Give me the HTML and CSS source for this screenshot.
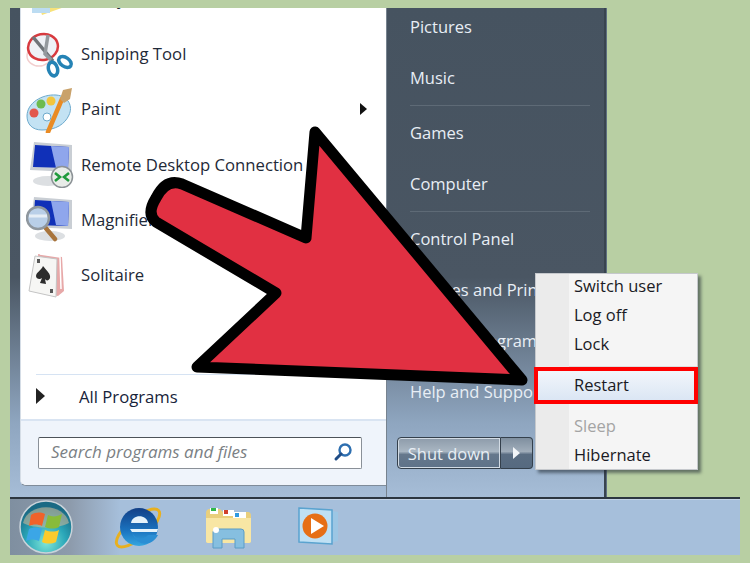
FILE: index.html
```html
<!DOCTYPE html>
<html lang="en">
  <head>
    <meta charset="UTF-8" />
    <title>Restart from the Start menu</title>
    <link rel="stylesheet" href="styles.css">
  </head>
  <body>
    <div class="desktop">
      <div class="startmenu">
        <div class="left">
          <ul class="programs">
            <li class="program">
              <svg class="icon" viewBox="0 0 48 48"><path d="M10 20 L36 12 L44 30 L16 40 Z" fill="#f7e27a"/><path d="M6 22 L24 20 L24 38 L6 38 Z" fill="#bcdcf2"/></svg>
              <span>Sticky Notes</span>
            </li>
            <li class="program">
              <svg class="icon" viewBox="0 0 48 48">
                <ellipse cx="13" cy="26" rx="12" ry="10" fill="none" stroke="#f2cfcf" stroke-width="1.5"/>
                <ellipse cx="17" cy="17" rx="15" ry="13" fill="#eef1f6" stroke="#d83a3f" stroke-width="2.5" transform="rotate(-12 17 17)"/>
                <path d="M7 7 L27 31" stroke="#6f7479" stroke-width="3.5"/>
                <path d="M22 5 L19 24 L25 30" fill="none" stroke="#94999e" stroke-width="3.5"/>
                <ellipse cx="27" cy="39" rx="4.5" ry="7" fill="#fff" stroke="#2583b5" stroke-width="3.5" transform="rotate(-15 27 39)"/>
                <ellipse cx="39" cy="32" rx="7" ry="4.5" fill="#fff" stroke="#2583b5" stroke-width="3.5" transform="rotate(35 39 32)"/>
              </svg>
              <span>Snipping Tool</span>
            </li>
            <li class="program">
              <svg class="icon" viewBox="0 0 48 48">
                <path d="M1 31 C1 18 16 9 30 10 C43 11 47 22 43 30 C39 39 30 45 16 45 C6 45 1 39 1 31 Z" fill="#c3e2f3" stroke="#6ca9cc"/>
                <circle cx="8" cy="28" r="4.5" fill="#e2574c"/>
                <circle cx="15" cy="19" r="4.5" fill="#6dbb4f"/>
                <circle cx="25" cy="16" r="4.5" fill="#f3c53d"/>
                <circle cx="21" cy="32" r="4" fill="#fff" stroke="#6ca9cc"/>
                <path d="M22 47 L36 14" stroke="#e98b24" stroke-width="4.5" stroke-linecap="round"/>
                <path d="M34 14 L37 5 L46 3 L44 14 L38 18 Z" fill="#c9a26b"/>
              </svg>
              <span>Paint</span>
              <i class="caret"></i>
            </li>
            <li class="program">
              <svg class="icon" viewBox="0 0 48 48">
                <ellipse cx="22" cy="41" rx="15" ry="5" fill="#dcdfe2"/>
                <path d="M8 2 L46 5 L46 32 L4 30 Z" fill="#c9ced4"/>
                <path d="M9 5 L43 7 L42 28 L7 27 Z" fill="#1030b8"/>
                <path d="M25 6 L43 7 L42 28 L30 28 Z" fill="#8fa6ec"/>
                <circle cx="36" cy="37" r="10.5" fill="#e8ece8" stroke="#8c9296" stroke-width="1.5"/>
                <path d="M29 33 L34 37 L29 41 M43 33 L38 37 L43 41" fill="none" stroke="#1f9a3c" stroke-width="2.6"/>
              </svg>
              <span>Remote Desktop Connection</span>
            </li>
            <li class="program">
              <svg class="icon" viewBox="0 0 48 48">
                <ellipse cx="24" cy="41" rx="15" ry="5" fill="#dcdfe2"/>
                <path d="M8 2 L46 5 L46 34 L4 32 Z" fill="#c9ced4"/>
                <path d="M9 5 L43 7 L42 31 L7 30 Z" fill="#1030b8"/>
                <path d="M25 6 L43 7 L42 31 L30 30 Z" fill="#8fa6ec"/>
                <path d="M18 31 L29 44" stroke="#a8743c" stroke-width="4.5" stroke-linecap="round"/>
                <circle cx="12" cy="23" r="11" fill="#b9cfe8" stroke="#8f979e" stroke-width="2.5"/>
                <path d="M3 21 H21" stroke="#e6eef6" stroke-width="3"/>
              </svg>
              <span>Magnifier</span>
            </li>
            <li class="program">
              <svg class="icon" viewBox="0 0 48 48">
                <path d="M12 3 L36 6 L38 40 L32 45 L14 42 Z" fill="#e7a8a8"/>
                <path d="M14 3 L34 6 L35 38" fill="none" stroke="#fff" stroke-width="1.5"/>
                <path d="M9 5 L31 8 L30 46 L3 40 Z" fill="#f6f6f4" stroke="#c4c4c4"/>
                <path d="M17 15 C21 20 25 23 24 27 C23 30 20 30 19 28 L20 33 L14 32 L16 27 C14 29 10 28 10 25 C10 21 15 20 17 15 Z" fill="#2c2c2c"/>
                <path d="M11 8 h3 v4 h-3 Z M24 38 h3 v4 h-3 Z" fill="#555"/>
              </svg>
              <span>Solitaire</span>
            </li>
          </ul>
          <div class="allprograms">
            <i class="caret big"></i>
            <span>All Programs</span>
          </div>
          <div class="searcharea">
            <div class="searchbox">
              <span>Search programs and files</span>
              <svg class="lens" viewBox="0 0 20 20"><circle cx="12" cy="8" r="5.5" fill="#fff" stroke="#2e6fb0" stroke-width="2.4"/><path d="M8 12 L3 17" stroke="#1f4c86" stroke-width="3" stroke-linecap="round"/></svg>
            </div>
          </div>
        </div>
        <div class="right">
          <ul class="places">
            <li>Pictures</li>
            <li>Music</li>
            <li class="sep"></li>
            <li>Games</li>
            <li>Computer</li>
            <li class="sep"></li>
            <li>Control Panel</li>
            <li>Devices and Printers</li>
            <li>Default Programs</li>
            <li>Help and Support</li>
          </ul>
          <div class="shutdown">
            <div class="sd-main">Shut down</div>
            <div class="sd-arrow"><i></i></div>
          </div>
        </div>
      </div>

      <div class="taskbar">
        <div class="orb-wrap">
          <svg class="orb" viewBox="0 0 56 56">
            <defs>
              <radialGradient id="orbfill" cx="50%" cy="80%" r="70%">
                <stop offset="0" stop-color="#7fe6d8"/>
                <stop offset="0.55" stop-color="#2aa6b8"/>
                <stop offset="1" stop-color="#1a6a84"/>
              </radialGradient>
            </defs>
            <circle cx="28" cy="28" r="26" fill="url(#orbfill)" stroke="#c9d3da" stroke-width="1.5"/>
            <path d="M5 24 C10 3 46 3 51 24 C40 30 16 30 5 24 Z" fill="#c8b89a" opacity="0.6"/>
            <path d="M13 16 C18 13 22 13 27 15 L24 27 C20 25 15 25 11 27 Z" fill="#f0622a"/>
            <path d="M30 16 C34 18 39 18 44 15 L41 28 C37 30 32 30 27 28 Z" fill="#88bb3a"/>
            <path d="M11 30 C15 28 20 28 24 30 L21 42 C17 40 13 40 8 42 Z" fill="#3ba6e6"/>
            <path d="M27 31 C32 33 37 33 41 31 L38 43 C34 45 28 45 24 43 Z" fill="#fbcb2c"/>
          </svg>
        </div>
        <svg class="app app-ie" viewBox="0 0 56 56">
          <defs>
            <linearGradient id="iefill" x1="0" y1="0" x2="0" y2="1">
              <stop offset="0" stop-color="#123f86"/>
              <stop offset="0.6" stop-color="#1b74c0"/>
              <stop offset="1" stop-color="#35a6e0"/>
            </linearGradient>
          </defs>
          <ellipse cx="28" cy="29" rx="27" ry="10" transform="rotate(-40 28 29)" fill="none" stroke="#e8b020" stroke-width="3"/>
          <circle cx="29" cy="28" r="19" fill="url(#iefill)"/>
          <path d="M21 24 C22 15 37 15 38 24 Z" fill="#e4f2fb"/>
          <path d="M20 30 L48 30 L47 33 L22 33 Z" fill="#e4f2fb"/>
          <path d="M22 33 C25 41 34 41 38 36 L48 36 C42 48 26 48 22 33 Z" fill="#2a8ed4"/>
        </svg>
        <svg class="app app-folder" viewBox="0 0 48 44">
          <path d="M2 8 Q2 4 6 4 H16 L19 7 H44 Q47 7 47 11 V36 Q47 38 44 38 H5 Q2 38 2 36 Z" fill="#e9cf7c"/>
          <path d="M6 3 H14 V9 H6 Z" fill="#fff"/><path d="M7 3 H12 V6 H7 Z" fill="#2fb84a"/>
          <path d="M19 5 H30 V11 H19 Z" fill="#fff"/><path d="M20 5 H24 V9 H20 Z" fill="#d0402c"/>
          <path d="M29 7 H42 V13 H29 Z" fill="#fff"/><path d="M31 8 H35 V12 H31 Z" fill="#2f9ae0"/>
          <path d="M2 13 H47 V36 Q47 38 44 38 H5 Q2 38 2 36 Z" fill="#f8e6a4"/>
          <path d="M9 43 V27 Q9 24 12 24 H37 Q40 24 40 27 V43 H31 V34 H18 V43 Z" fill="#86bfe0" stroke="#5a9cc6"/>
          <circle cx="12" cy="25" r="3" fill="#fff"/>
        </svg>
        <svg class="app app-wmp" viewBox="0 0 44 40">
          <path d="M30 3 L41 5 V34 L30 37 Z" fill="#9cc6e4"/>
          <path d="M2 1 L35 3 V37 L2 35 Z" fill="#bfe0f4" stroke="#5aa3cf" stroke-width="1.5"/>
          <circle cx="18" cy="19" r="12.5" fill="#e66f16"/>
          <path d="M14 11 L27 19 L14 27 Z" fill="#fff"/>
        </svg>
      </div>

      <svg class="arrow" viewBox="0 0 730 547">
        <path d="M305 124 L512 372 L187 359 L266 285 L146 214 Q136 206 146 190 Q156 170 172 176 L296 230 Z" fill="#e13042" stroke="#000" stroke-width="11" stroke-linejoin="round"/>
      </svg>

      <ul class="powermenu">
        <li>Switch user</li>
        <li>Log off</li>
        <li>Lock</li>
        <li class="menusep"></li>
        <li class="active">Restart</li>
        <li class="menusep low"></li>
        <li class="disabled">Sleep</li>
        <li class="last">Hibernate</li>
      </ul>
    </div>
  </body>
</html>
```

FILE: styles.css
```css
* {
  box-sizing: border-box;
}
body {
  margin: 0;
  padding: 8px 10px;
  height: 563px;
  overflow: hidden;
  background: #b8cfa3;
  font-family: "Open Sans", "Noto Sans", sans-serif;
}
ul {
  list-style: none;
  margin: 0;
  padding: 0;
}
.desktop {
  position: relative;
  width: 730px;
  height: 547px;
  overflow: hidden;
}

/* Start menu */
.startmenu {
  display: flex;
  width: 597px;
  height: 489px;
  background: linear-gradient(#465360 0%, #4a5663 55%, #8fa6c0 85%, #a6bdd7 100%);
  border-right: 1px solid #5e6f80;
}
.left {
  width: 366px;
  height: 478px;
  margin-left: 10px;
  display: flex;
  flex-direction: column;
  background: #fff;
  border-bottom-left-radius: 6px;
  border-bottom: 1px solid #7f8c9a;
  border-left: 1px solid #d5dde6;
  overflow: hidden;
}
.programs {
  margin-top: -37px;
  height: 403px;
}
.program {
  display: flex;
  align-items: center;
  height: 55.2px;
  padding-left: 5px;
  font-size: 16.7px;
  color: #1f2a38;
}
.icon {
  width: 48px;
  height: 48px;
  margin-right: 7px;
  flex: none;
  filter: blur(0.3px);
}
.caret {
  width: 0;
  height: 0;
  margin-left: auto;
  margin-right: 19px;
  border-left: 7px solid #111;
  border-top: 6px solid transparent;
  border-bottom: 6px solid transparent;
}
.allprograms {
  display: flex;
  align-items: center;
  height: 45px;
  margin: 0 10px 0 15px;
  padding-bottom: 2px;
  border-top: 1px solid #d6e3f3;
  font-size: 16.7px;
  color: #17233a;
}
.caret.big {
  margin: 0 34px 0 0;
  border-left-width: 9px;
  border-top-width: 8px;
  border-bottom-width: 8px;
  border-left-color: #222;
}
.searcharea {
  flex: 1;
  padding: 16px 24px 0 17px;
  background: #eff4fb;
  border-top: 2px solid #d9e4f2;
}
.searchbox {
  display: flex;
  align-items: center;
  justify-content: space-between;
  height: 32px;
  padding: 0 8px 3px 12px;
  background: #fff;
  border: 1px solid #8a9098;
  border-top-color: #4c5258;
  border-radius: 2px;
  font-size: 17px;
  font-style: italic;
  color: #7b7f84;
}
.lens {
  width: 20px;
  height: 20px;
}

/* Right column */
.right {
  flex: 1;
  padding-left: 23px;
  border-left: 1px solid #77838f;
  border-right: 2px solid #39444f;
}
.places {
  margin-top: -7px;
  color: #e8eef5;
  font-size: 16.5px;
}
.places li {
  display: flex;
  align-items: center;
  height: 51px;
}
.places .sep {
  height: 1px;
  width: 180px;
  margin: 1.5px 0;
  background: #5e6a76;
}
.shutdown {
  display: flex;
  width: 136px;
  height: 32px;
  margin: 20px 0 0 -13px;
}
.sd-main {
  display: flex;
  align-items: center;
  justify-content: center;
  width: 104px;
  background: linear-gradient(#8d9baa 0%, #a9b6c2 45%, #66788c 55%, #5e7288 100%);
  border: 1px solid #34404c;
  border-radius: 4px 0 0 4px;
  box-shadow: inset 0 0 0 1px #d2dbe4;
  color: #e8eef4;
  font-size: 16.5px;
}
.sd-arrow {
  display: flex;
  align-items: center;
  justify-content: center;
  flex: 1;
  background: linear-gradient(#7f8f9f 0%, #a0adba 45%, #5a6d82 55%, #566a80 100%);
  border: 1px solid #34404c;
  border-left: 0;
  border-radius: 0 4px 4px 0;
}
.sd-arrow i {
  width: 0;
  height: 0;
  border-left: 7px solid #f2f5f8;
  border-top: 6px solid transparent;
  border-bottom: 6px solid transparent;
}

/* Taskbar */
.taskbar {
  display: flex;
  align-items: center;
  height: 58px;
  background: #a6bfdb;
  border-top: 2px solid #2c3640;
  box-shadow: inset 0 1px 0 #c3d3e6;
}
.orb-wrap {
  display: flex;
  align-items: center;
  width: 110px;
  height: 100%;
  padding-left: 8px;
  background: linear-gradient(90deg, #7f8fa0 0%, #8d9bac 55%, #a6bfdb 100%);
}
.orb {
  width: 56px;
  height: 56px;
  filter: blur(0.4px);
}
.app {
  flex: none;
  filter: blur(0.4px);
}
.app-ie {
  width: 56px;
  height: 56px;
  margin-left: -10px;
  overflow: visible;
}
.app-folder {
  width: 48px;
  height: 44px;
  margin-left: 38px;
}
.app-wmp {
  width: 44px;
  height: 40px;
  margin-left: 45px;
}

/* Overlays */
.arrow {
  position: absolute;
  left: 0;
  top: 0;
  width: 730px;
  height: 547px;
}
.powermenu {
  position: absolute;
  left: 525px;
  top: 265px;
  width: 163px;
  height: 197px;
  background: linear-gradient(90deg, #ebebeb 0, #ebebeb 33px, #f5f5f5 33px);
  border: 1px solid #c5c8cc;
  box-shadow: 3px 3px 3px rgba(30, 40, 50, 0.55);
  font-size: 16.5px;
  color: #1a1a24;
}
.powermenu li {
  height: 29px;
  padding-left: 38px;
  line-height: 24px;
}
.powermenu .menusep {
  height: 6px;
  padding: 0;
  margin-left: 33px;
  border-bottom: 1px solid #dedede;
}
.powermenu .menusep.low {
  height: 10px;
  border-bottom: 0;
}
.powermenu .active {
  height: 37px;
  margin: 0 -1px 0 -2px;
  padding-left: 36px;
  line-height: 27px;
  background: linear-gradient(#f2f6fb, #dbe6f4);
  border: 4px solid #f00;
}
.powermenu .disabled {
  color: #a4a4a4;
}
.powermenu .last {
  height: 26px;
}
```
